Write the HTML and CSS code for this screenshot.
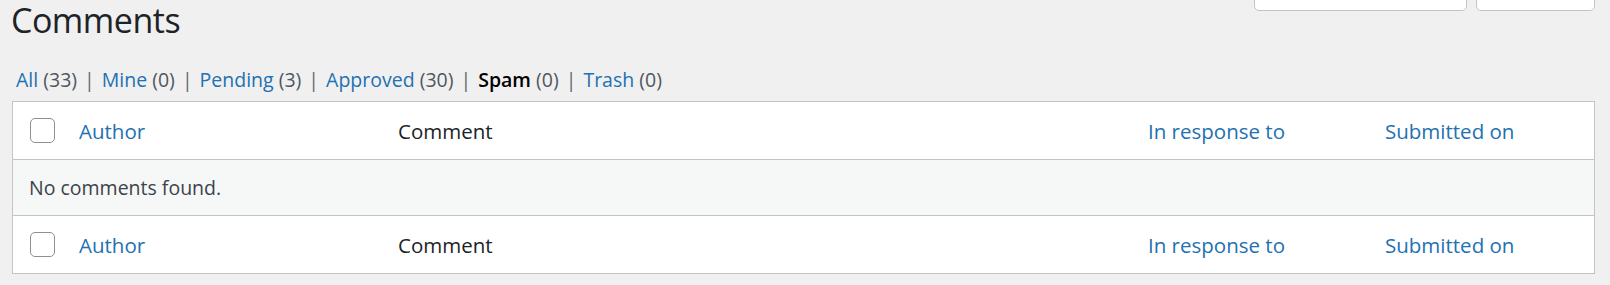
FILE: index.html
```html
<!DOCTYPE html>
<html lang="en">
<head>
<meta charset="utf-8">
<title>Comments</title>
<link rel="stylesheet" href="styles.css">
</head>
<body>
<div class="wrap">
  <div class="page-head">
    <h1 class="title">Comments</h1>
    <div class="search">
      <span class="search-input"></span>
      <span class="search-button"></span>
    </div>
  </div>

  <ul class="views">
    <li><a href="#">All <span class="count">(33)</span></a></li>
    <li class="sep">|</li>
    <li><a href="#">Mine <span class="count">(0)</span></a></li>
    <li class="sep">|</li>
    <li><a href="#">Pending <span class="count">(3)</span></a></li>
    <li class="sep">|</li>
    <li><a href="#">Approved <span class="count">(30)</span></a></li>
    <li class="sep">|</li>
    <li><a href="#" class="current">Spam <span class="count">(0)</span></a></li>
    <li class="sep">|</li>
    <li><a href="#">Trash <span class="count">(0)</span></a></li>
  </ul>

  <div class="list">
    <div class="row head-row">
      <div class="cell cb"><span class="checkbox"></span></div>
      <div class="cell"><a href="#" class="col-link">Author</a></div>
      <div class="cell col-plain">Comment</div>
      <div class="cell"><a href="#" class="col-link">In response to</a></div>
      <div class="cell"><a href="#" class="col-link">Submitted on</a></div>
    </div>
    <div class="row empty-row">
      <div class="empty-text">No comments found.</div>
    </div>
    <div class="row foot-row">
      <div class="cell cb"><span class="checkbox"></span></div>
      <div class="cell"><a href="#" class="col-link">Author</a></div>
      <div class="cell col-plain">Comment</div>
      <div class="cell"><a href="#" class="col-link">In response to</a></div>
      <div class="cell"><a href="#" class="col-link">Submitted on</a></div>
    </div>
  </div>
</div>
</body>
</html>
```

FILE: styles.css
```css
html, body {
  margin: 0;
  padding: 0;
  background: #f0f0f1;
  font-family: "Open Sans", "Noto Sans", sans-serif;
  color: #3c434a;
  overflow: hidden;
}

.wrap {
  padding: 0 15px 0 12px;
}

.page-head {
  display: flex;
  justify-content: space-between;
  align-items: flex-start;
}

.title {
  margin: 0 0 0 -1px;
  font-size: 34px;
  letter-spacing: -0.5px;
  font-weight: 400;
  line-height: 40px;
  color: #1d2327;
}

.search {
  display: flex;
  gap: 9px;
  margin-top: -30px;
}

.search-input,
.search-button {
  display: block;
  height: 41px;
  box-sizing: border-box;
  background: #fff;
  border: 1px solid #c3c4c7;
  border-radius: 5px;
}

.search-input {
  width: 213px;
}

.search-button {
  width: 119px;
}

.views {
  list-style: none;
  margin: 26px 0 0 4px;
  padding: 0;
  display: flex;
  font-size: 19.5px;
  line-height: 28px;
  height: 28px;
  color: #646970;
}

.views li {
  white-space: nowrap;
}

.views .sep {
  margin: 0 7px;
}

.views a {
  color: #2271b1;
  text-decoration: none;
}

.views a.current {
  color: #000;
  font-weight: 600;
}

.views .count {
  color: #50575e;
  font-weight: 400;
}

.list {
  margin-top: 7px;
  background: #fff;
  border: 1px solid #c3c4c7;
}

.row {
  display: grid;
  grid-template-columns: 66px 319px 750px 237px 1fr;
  align-items: center;
  font-size: 20.5px;
  line-height: 28px;
}

.head-row {
  height: 57px;
  border-bottom: 1px solid #c3c4c7;
}

.foot-row {
  height: 57px;
}

.empty-row {
  display: flex;
  height: 55px;
  border-bottom: 1px solid #c3c4c7;
  background: #f6f7f7;
  font-size: 19.5px;
}

.empty-text {
  padding-left: 16px;
  color: #3c434a;
}

.cell {
  white-space: nowrap;
}

.cb {
  display: flex;
  align-items: center;
  padding-left: 17px;
}

.checkbox {
  display: block;
  width: 25px;
  height: 25px;
  box-sizing: border-box;
  border: 1px solid #8c8f94;
  border-radius: 5px;
  background: #fff;
}

.col-link {
  color: #2271b1;
  text-decoration: none;
}

.col-plain {
  color: #1d2327;
}
```
